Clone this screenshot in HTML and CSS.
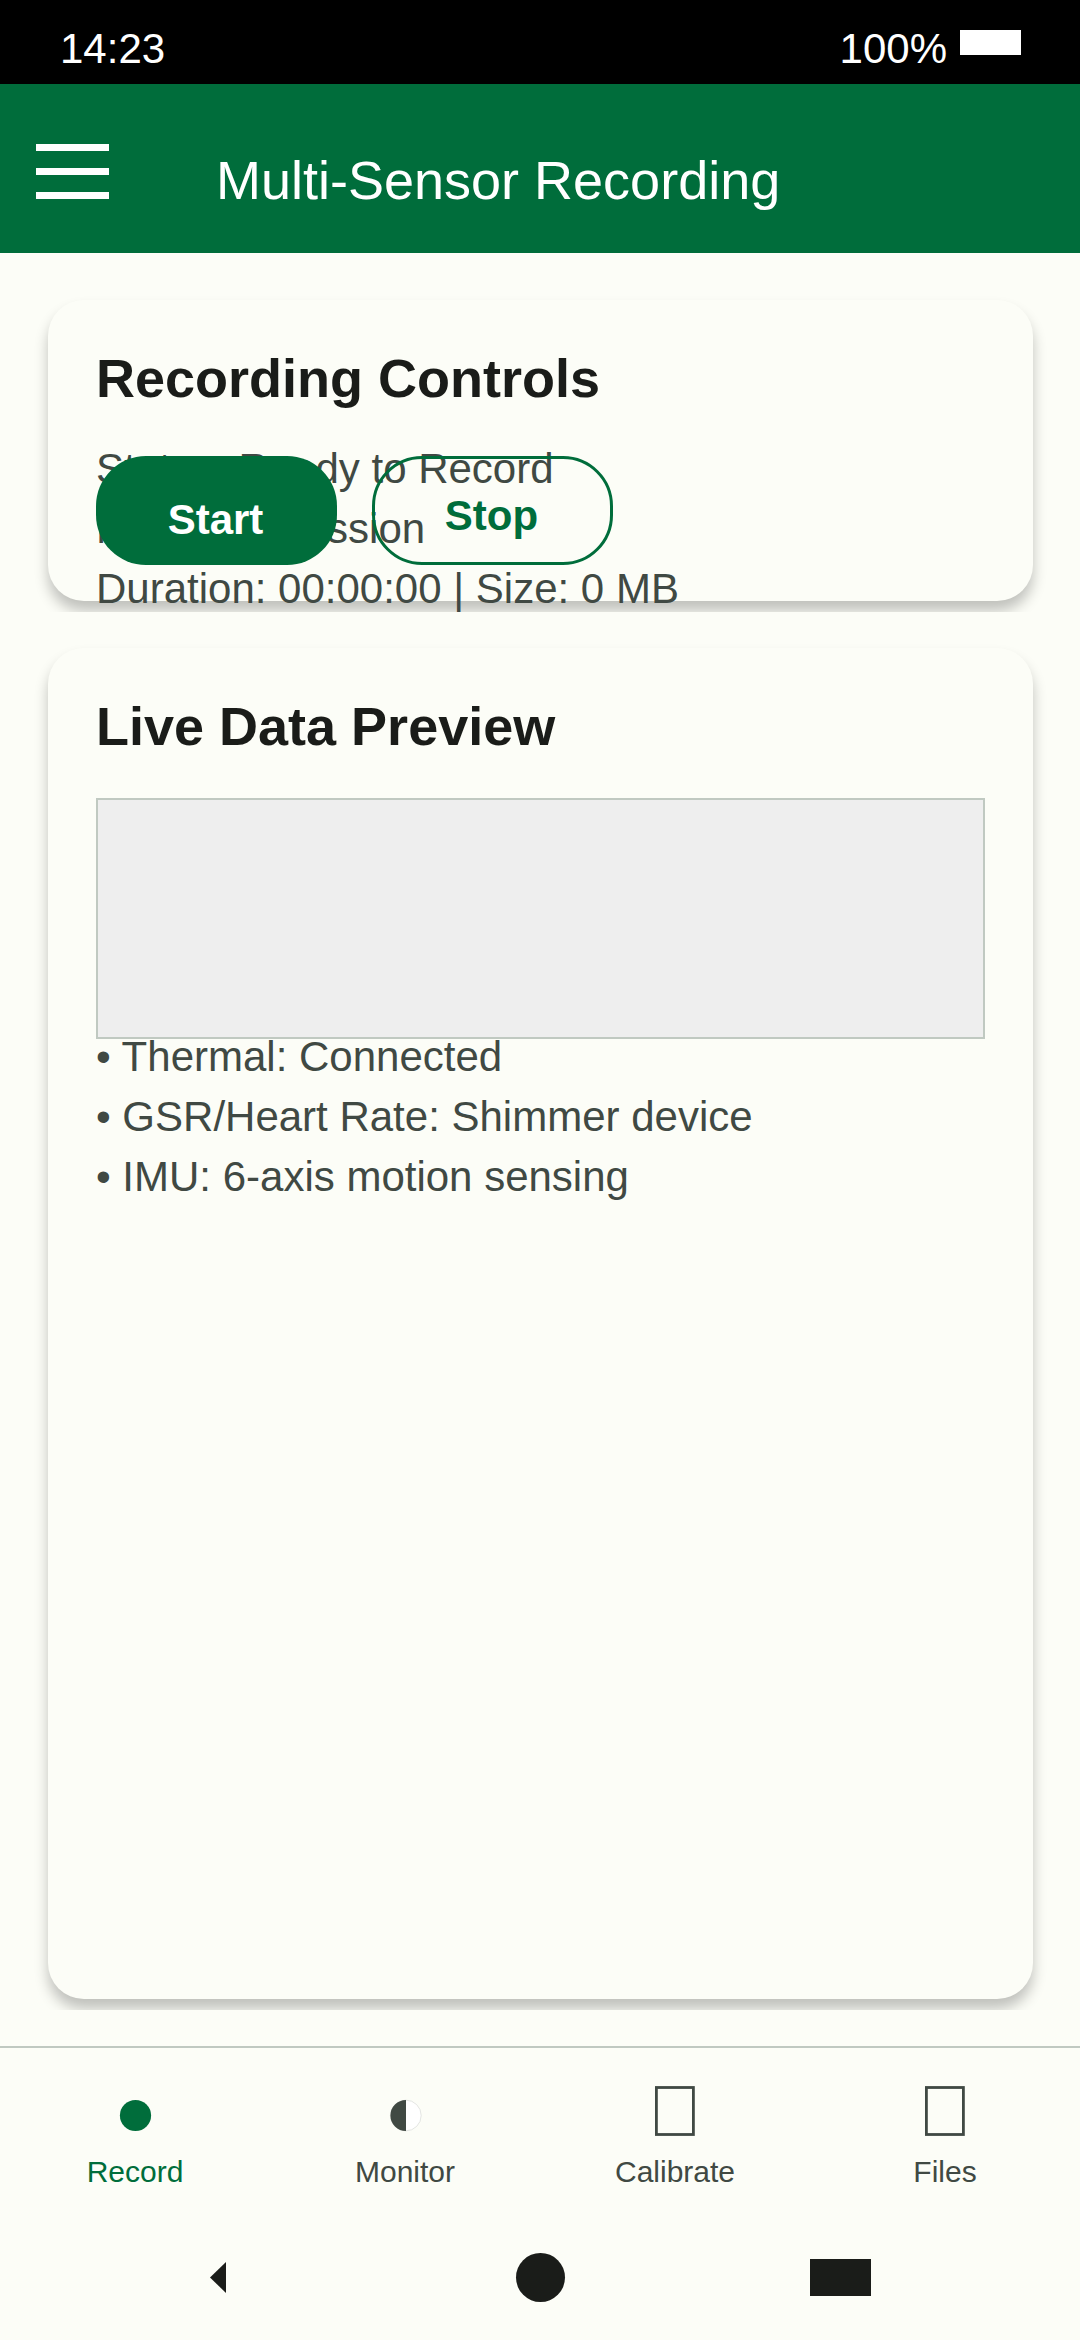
FILE: index.html
```html
<!DOCTYPE html>
<html lang="en">
<head>
<meta charset="utf-8">
<title>Multi-Sensor Recording</title>
<link rel="stylesheet" href="styles.css">
</head>
<body>
<div class="screen">
  <div class="status-bar">
    <span class="clock">14:23</span>
    <span class="battery-level">100%</span>
    <span class="battery"></span>
  </div>
  <header class="app-bar">
    <div class="menu"><span></span><span></span><span></span></div>
    <h1 class="app-title">Multi-Sensor Recording</h1>
  </header>
  <main class="content">
    <section class="card card-controls">
      <h2 class="card-title">Recording Controls</h2>
      <div class="lines status-lines">
        <p>Status: Ready to Record</p>
        <p>No active session</p>
        <p>Duration: 00:00:00 | Size: 0 MB</p>
      </div>
      <div class="actions">
        <button class="btn btn-filled">Start</button>
        <button class="btn btn-outlined">Stop</button>
      </div>
    </section>
    <section class="card card-preview">
      <h2 class="card-title">Live Data Preview</h2>
      <div class="preview"></div>
      <div class="lines sensor-lines">
        <p>• Thermal: Connected</p>
        <p>• GSR/Heart Rate: Shimmer device</p>
        <p>• IMU: 6-axis motion sensing</p>
      </div>
    </section>
  </main>
  <nav class="tabs">
    <a class="tab tab-active">
      <svg width="60" height="52" viewBox="0 0 60 52"><circle cx="30.5" cy="30.5" r="15.6" fill="currentColor"/></svg>
      <span>Record</span>
    </a>
    <a class="tab">
      <svg width="60" height="52" viewBox="0 0 60 52"><circle cx="30.8" cy="30.5" r="15.4" fill="#fff" stroke="#dcdedb" stroke-width=".8"/><path d="M31 14.9a15.6 15.6 0 0 0 0 31.2z" fill="currentColor"/></svg>
      <span>Monitor</span>
    </a>
    <a class="tab">
      <svg width="60" height="52" viewBox="0 0 60 52"><rect x="11.4" y="2.5" width="37" height="47" fill="none" stroke="currentColor" stroke-width="2.8"/></svg>
      <span>Calibrate</span>
    </a>
    <a class="tab">
      <svg width="60" height="52" viewBox="0 0 60 52"><rect x="11.4" y="2.5" width="37" height="47" fill="none" stroke="currentColor" stroke-width="2.8"/></svg>
      <span>Files</span>
    </a>
  </nav>
  <div class="system-nav">
    <svg class="back" width="16" height="31" viewBox="0 0 16 31"><path d="M0 15.5L16 0V31z" fill="currentColor"/></svg>
    <span class="home"></span>
    <span class="recents"></span>
  </div>
</div>
</body>
</html>
```

FILE: styles.css
```css
* { box-sizing: border-box; margin: 0; padding: 0; }

body {
  background: #fcfdf7;
  color: #1a1c19;
  font-family: "Liberation Sans", Arial, sans-serif;
}

.screen {
  width: 1080px;
  height: 2340px;
  display: flex;
  flex-direction: column;
  overflow: hidden;
}

.status-bar {
  height: 84px;
  padding: 25px 59px 0 60px;
  display: flex;
  align-items: flex-start;
  background: #000;
  color: #fff;
  font-size: 42px;
  line-height: 47px;
}
.battery-level { margin-left: auto; }
.battery { width: 61px; height: 25px; margin: 5px 0 0 13px; background: #fff; }

.app-bar {
  height: 169px;
  padding: 60px 36px 0;
  display: flex;
  align-items: flex-start;
  gap: 107px;
  background: #006d3b;
  color: #fff;
}
.menu { display: flex; flex-direction: column; gap: 17px; }
.menu span { width: 73px; height: 7px; background: #fff; }
.app-title { padding-top: 6px; font-size: 54px; font-weight: 400; line-height: 60px; }

.content {
  height: 1793px;
  padding: 47px 47px 47px 48px;
  display: flex;
  flex-direction: column;
  gap: 47px;
}

.card {
  position: relative;
  isolation: isolate;
  padding: 48px;
  border-radius: 36px;
  background: #fcfdf7;
}
/* Card shadow, cut off 11px below the card */
.card::before {
  content: "";
  position: absolute;
  inset: 0;
  z-index: -1;
  border-radius: 36px;
  box-shadow: 0 10px 14px rgba(0, 0, 0, .24);
  clip-path: inset(-24px -24px -11px -24px);
}
.card-controls { height: 301px; }
.card-preview { height: 1351px; }
.card-title { font-size: 54px; line-height: 60px; }

.lines { color: #404943; font-size: 42px; line-height: 60px; white-space: nowrap; }
.status-lines { margin-top: 31px; }
.sensor-lines { margin-top: -12px; }

.actions { position: absolute; left: 48px; top: 156px; display: flex; gap: 35px; }
.btn {
  width: 241px;
  height: 109px;
  border-radius: 50px;
  font: bold 42px/47px "Liberation Sans", Arial, sans-serif;
}
.btn-filled { padding: 18px 2px 0 0; border: 0; background: #006d3b; color: #fff; }
.btn-outlined { padding: 10px 2px 0 0; border: 3px solid #006d3b; background: transparent; color: #006d3b; }

.preview { width: 889px; height: 241px; margin-top: 42px; border: 2px solid #c0c9c1; background: #eee; }

.tabs {
  height: 192px;
  padding-top: 37px;
  display: grid;
  grid-template-columns: repeat(4, 1fr);
  border-top: 2px solid #c0c9c1;
}
.tab {
  display: flex;
  flex-direction: column;
  align-items: center;
  gap: 18px;
  color: #404943;
  font-size: 30px;
  line-height: 34px;
}
.tab-active { color: #006d3b; }

.system-nav {
  height: 79px;
  padding: 0 0 0 210px;
  display: flex;
  align-items: center;
  color: #1a1c19;
}
.home { width: 49px; height: 49px; margin-left: 290px; border-radius: 50%; background: currentColor; }
.recents { width: 61px; height: 37px; margin-left: 245px; background: currentColor; }
```
